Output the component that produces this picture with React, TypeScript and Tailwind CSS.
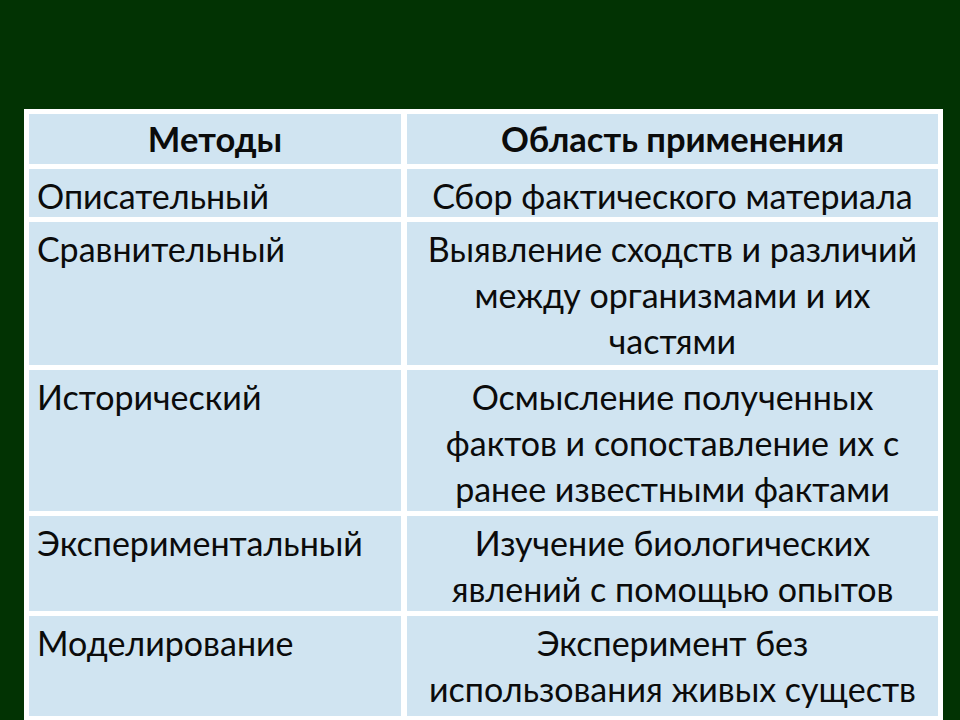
import React from "react";

const rows: { m: string; a: React.ReactNode; h: string }[] = [
  { m: "Описательный", a: "Сбор фактического материала", h: "h-[48px]" },
  { m: "Сравнительный", a: "Выявление сходств и различий между организмами и их частями", h: "h-[143px]" },
  { m: "Исторический", a: "Осмысление полученных фактов и сопоставление их с ранее известными фактами", h: "h-[141px]" },
  { m: "Экспериментальный", a: "Изучение биологических явлений с помощью опытов", h: "h-[95px]" },
  {
    m: "Моделирование",
    a: (
      <>
        Эксперимент без
        <br />
        использования живых существ
      </>
    ),
    h: "h-[100px]",
  },
];

export default function App() {
  return (
    <div
      className="w-[960px] h-[720px] overflow-hidden bg-[#023303] pt-[109px] pl-[24px]"
      style={{ fontFamily: "Lato, 'Open Sans', sans-serif" }}
    >
      <div className="w-[919px] bg-white p-[5px] grid grid-cols-[372px_531px] gap-x-[6px] gap-y-[5px] text-[#0b0b0b]">
        <div className="h-[50px] bg-[#d0e4f1] flex items-center justify-center font-bold text-[34.5px]">Методы</div>
        <div className="h-[50px] bg-[#d0e4f1] flex items-center justify-center font-bold text-[34.5px]">Область применения</div>
        {rows.map((r) => (
          <React.Fragment key={r.m}>
            <div className={`${r.h} bg-[#d0e4f1] pl-[8px] pt-[4px] text-[34px] leading-[46px] whitespace-nowrap`}>{r.m}</div>
            <div className={`${r.h} bg-[#d0e4f1] px-[8px] pt-[4px] text-[34px] leading-[46px] text-center`}>{r.a}</div>
          </React.Fragment>
        ))}
      </div>
    </div>
  );
}
